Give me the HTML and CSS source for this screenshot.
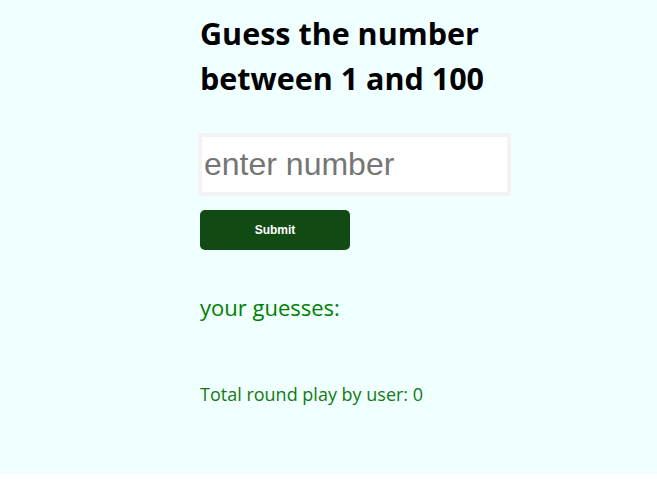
FILE: index.html
```html
<!DOCTYPE html>
<html lang="en">
<head>
<meta charset="utf-8">
<title>Guess the number</title>
<link rel="stylesheet" href="styles.css">
</head>
<body>
<div class="app">
  <div class="game">
    <h1 class="title">Guess the number between 1 and 100</h1>
    <input class="guess-input" type="number" placeholder="enter number">
    <button class="submit-btn" type="button">Submit</button>
    <p class="guesses">your guesses:</p>
    <p class="rounds">Total round play by user: 0</p>
  </div>
</div>
</body>
</html>
```

FILE: styles.css
```css
html, body {
  margin: 0;
  padding: 0;
  background: #ffffff;
}

.app {
  background: #f0ffff;
  height: 473px;
  overflow: hidden;
  font-family: "Open Sans", "Noto Sans", sans-serif;
}

.game {
  display: flex;
  flex-direction: column;
  align-items: flex-start;
  padding-left: 200px;
  width: 313px;
}

.title {
  margin: 11px 0 0 0;
  font-size: 30.5px;
  line-height: 45px;
  font-weight: 700;
  color: #000000;
  width: 300px;
}

.guess-input {
  box-sizing: border-box;
  margin: 32px 0 0 -2px;
  width: 313px;
  height: 63px;
  border: 4px solid #f3f3f3;
  background: #ffffff;
  padding: 0 2px;
  font-family: "Liberation Sans", Arial, sans-serif;
  font-size: 32px;
  color: #000;
  outline: none;
}

.guess-input::placeholder {
  color: #757575;
}

.submit-btn {
  margin-top: 14px;
  width: 150px;
  height: 40px;
  border: none;
  border-radius: 5px;
  background: #124a14;
  color: #ffffff;
  font-family: "Liberation Sans", Arial, sans-serif;
  font-size: 12px;
  font-weight: 700;
  cursor: pointer;
}

.guesses {
  margin: 43px 0 0 0;
  font-size: 22px;
  line-height: 28px;
  color: #008000;
}

.rounds {
  margin: 61px 0 0 0;
  font-size: 18px;
  line-height: 24px;
  color: #127a12;
}
```
